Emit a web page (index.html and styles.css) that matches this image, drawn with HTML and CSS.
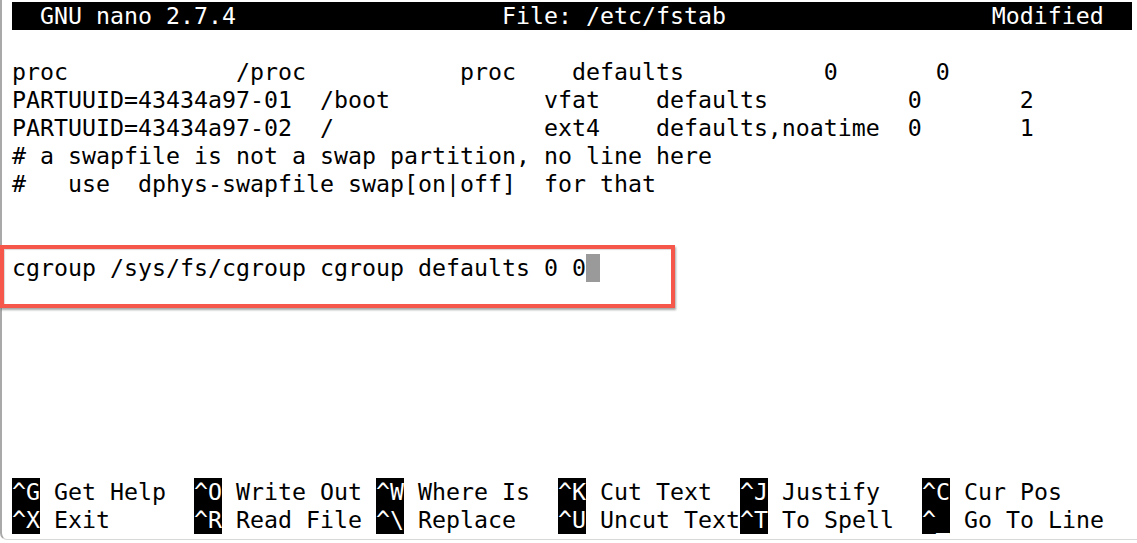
FILE: index.html
```html
<!DOCTYPE html>
<html>
<head>
<meta charset="utf-8">
<link rel="stylesheet" href="styles.css">
</head>
<body>
<div class="window">
  <div class="term">
    <div class="row title">  GNU nano 2.7.4                   File: /etc/fstab                   Modified  </div>
    <div class="row"> </div>
    <div class="row">proc            /proc           proc    defaults          0       0</div>
    <div class="row">PARTUUID=43434a97-01  /boot           vfat    defaults          0       2</div>
    <div class="row">PARTUUID=43434a97-02  /               ext4    defaults,noatime  0       1</div>
    <div class="row"># a swapfile is not a swap partition, no line here</div>
    <div class="row">#   use  dphys-swapfile swap[on|off]  for that</div>
    <div class="row"> </div>
    <div class="row"> </div>
    <div class="row">cgroup /sys/fs/cgroup cgroup defaults 0 0<span class="cursor"> </span></div>
    <div class="row"> </div>
    <div class="row"> </div>
    <div class="row"> </div>
    <div class="row"> </div>
    <div class="row"> </div>
    <div class="row"> </div>
    <div class="row"> </div>
    <div class="row"><span class="key">^G</span> Get Help  <span class="key">^O</span> Write Out <span class="key">^W</span> Where Is  <span class="key">^K</span> Cut Text  <span class="key">^J</span> Justify   <span class="key">^C</span> Cur Pos</div>
    <div class="row"><span class="key">^X</span> Exit      <span class="key">^R</span> Read File <span class="key">^\</span> Replace   <span class="key">^U</span> Uncut Text<span class="key">^T</span> To Spell  <span class="key">^_</span> Go To Line</div>
  </div>
  <div class="highlight"></div>
</div>
</body>
</html>
```

FILE: styles.css
```css
html, body {
  margin: 0;
  padding: 0;
  background: #ffffff;
  overflow: hidden;
}

.window {
  position: relative;
  width: 1150px;
  height: 540px;
  border-left: 2px solid #a9a9a9;
  border-bottom: 1px solid #d8d8d8;
  border-bottom-left-radius: 7px;
  box-sizing: border-box;
}

.term {
  padding: 2px 0 0 10px;
  font-family: "DejaVu Sans Mono", monospace;
  font-size: 23.25px;
  color: #000;
}

.row {
  height: 28px;
  line-height: 28px;
  white-space: pre;
}

.title {
  display: inline-block;
  background: #000;
  color: #fff;
  vertical-align: top;
}

.key {
  display: inline-block;
  height: 28px;
  background: #000;
  color: #fff;
  vertical-align: top;
  overflow: visible;
}

.cursor {
  display: inline-block;
  width: 14px;
  height: 28px;
  background: #9a9a9a;
  vertical-align: top;
}

.highlight {
  position: absolute;
  left: -2px;
  top: 245px;
  width: 675px;
  height: 63px;
  border: 4px solid #f5584b;
  box-sizing: border-box;
  box-shadow: 1px 2px 2px rgba(0, 0, 0, 0.35), inset 1px 1px 1px rgba(0, 0, 0, 0.15);
}
```
